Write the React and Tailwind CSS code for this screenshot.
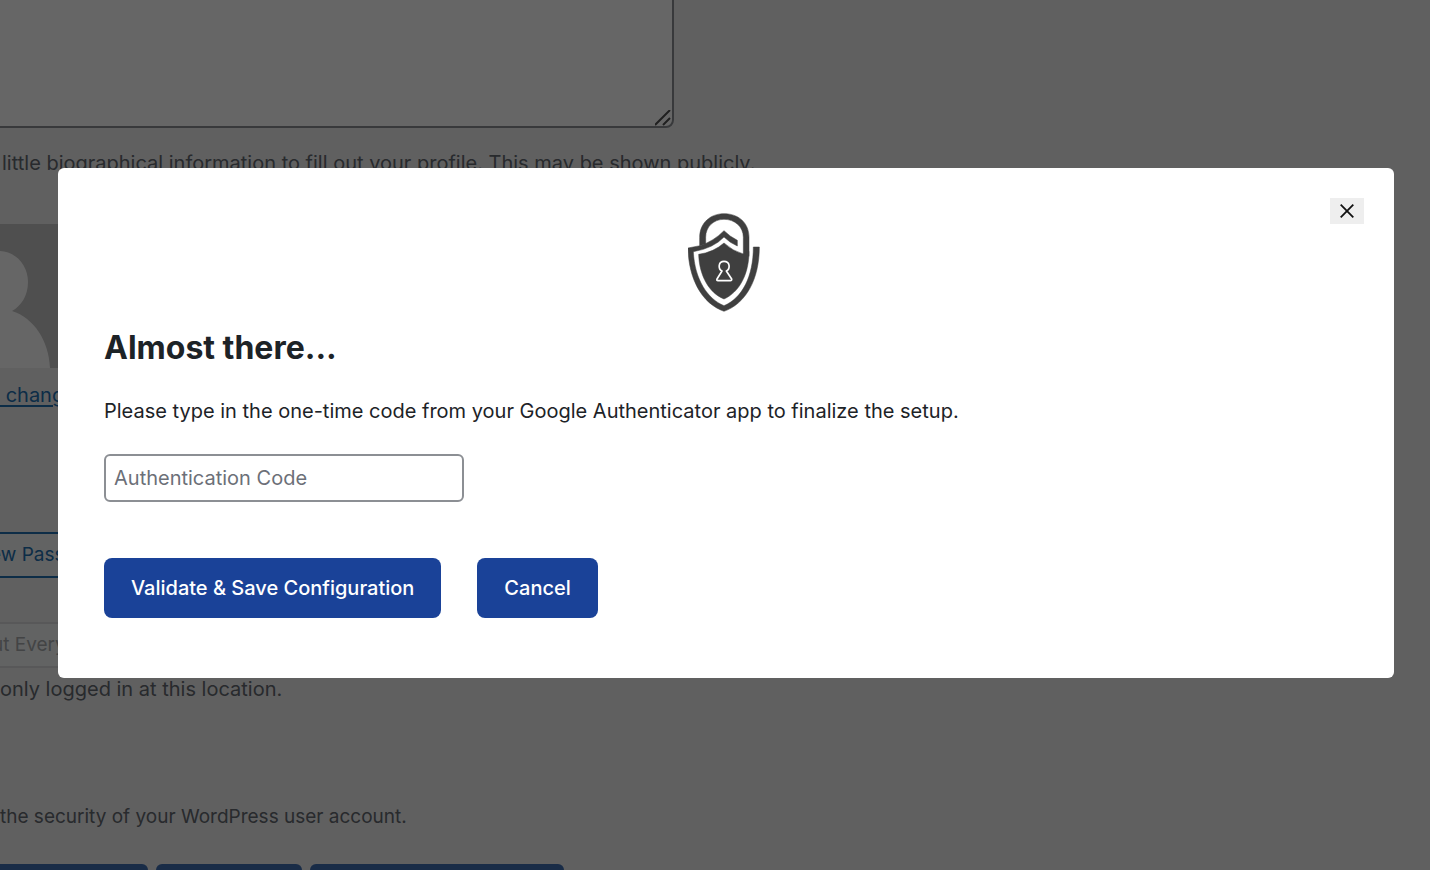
function ShieldLogo() {
  return (
    <svg viewBox="72 40 216 297" className="h-[99px] w-[72px]" role="img" aria-label="Security logo" fill="#3f3f3f">
      <g stroke="#3f3f3f" strokeWidth="1.5">
        <path d="M107 138V113C107 69 140 42 180 42C223 42 255 69 255 113V170L238 164V113C238 81 212 59 180 59C149 59 125 81 125 113V132Z" />
        <path d="M72 145L108 138Q150 124 180 93Q198 111 220 122V139Q198 130 180 112Q148 146 88 156C92 238 130 298 180 318C235 295 268 230 268 142H286C286 240 245 312 180 335C115 312 74 240 72 145Z" />
        <path d="M180 130Q148 158 104 164C106 228 135 280 180 298C225 278 255 225 255 155L238 163Q206 154 180 130Z" />
      </g>
      <path
        d="M174 214C161 207 163 185 180 185C198 185 200 207 187 214L203 238Q204 243 199 243H162Q157 243 159 238Z"
        fill="none"
        stroke="#fff"
        strokeWidth="5"
        strokeLinejoin="round"
      />
    </svg>
  );
}

function ProfilePage() {
  return (
    <main className="flex h-full flex-col items-start overflow-hidden bg-[#f0f0f1] text-xl text-[#646970]">
      <div className="relative h-32 w-[674px] shrink-0">
        <textarea
          aria-label="Biographical info"
          className="-ml-2 -mt-2 h-[136px] w-[682px] resize-none rounded-lg border-2 border-[#8c8f94] bg-white"
        />
        <svg viewBox="0 0 16 16" className="absolute bottom-0.5 right-[3px] size-4" stroke="#505050" strokeWidth="2" aria-hidden="true">
          <path d="M0 15L15 0M8 15L15 8" />
        </svg>
      </div>
      <p className="mt-5 pl-0.5 leading-[30px]">little biographical information to fill out your profile. This may be shown publicly.</p>
      <svg viewBox="0 0 72 144" className="mt-[46px] h-36 w-[72px] shrink-0" aria-hidden="true">
        <path d="M0 0H72V144H0Z" fill="#c5c5c5" />
        <path d="M0 27C17 28 28 42 28 58C28 72 21 82 12 87C34 94 49 117 50 144H0Z" fill="#fff" />
      </svg>
      <a href="#avatar" className="mt-3 whitespace-pre leading-[30px] text-[#2271b1] underline decoration-2 underline-offset-3">
        {" change"}
      </a>
      <button type="button" className="-ml-3 mt-[122px] h-[46px] shrink-0 rounded-md border-2 border-[#2271b1] bg-[#f6f7f7] pr-6 text-[19px] text-[#2271b1]">
        ew Password
      </button>
      <button type="button" disabled className="-ml-3 mt-11 h-[46px] shrink-0 rounded-md border-2 border-[#dcdcde] bg-[#f6f7f7] pl-0.5 pr-6 text-[19px] text-[#a7aaad]">
        ut Everywhere Else
      </button>
      <p className="mt-1.5 leading-[30px]">only logged in at this location.</p>
      <p className="mt-[98px] text-[19px] leading-[30px]">the security of your WordPress user account.</p>
      <div className="mt-8 flex gap-2">
        <button type="button" aria-label="Configure" className="h-11 w-[148px] rounded-r-md bg-[#3f6eb1]" />
        <button type="button" aria-label="Change" className="h-11 w-[146px] rounded-md bg-[#3f6eb1]" />
        <button type="button" aria-label="Backup codes" className="h-11 w-[254px] rounded-md bg-[#3f6eb1]" />
      </div>
    </main>
  );
}

function SetupDialog() {
  return (
    <section
      role="dialog"
      aria-modal="true"
      aria-labelledby="setup-title"
      className="relative flex w-full flex-col rounded-md bg-white px-[46px] pb-[60px] pt-[45px] text-xl text-[#1d2327]"
    >
      <button
        type="button"
        aria-label="Close"
        className="absolute right-[30px] top-[30px] flex h-[26px] w-[34px] items-center justify-center bg-[#eeeeee]"
      >
        <svg viewBox="0 0 14 14" className="size-3.5" stroke="#111" strokeWidth="1.8" aria-hidden="true">
          <path d="M0.7 0.7L13.3 13.3M13.3 0.7L0.7 13.3" />
        </svg>
      </button>
      <div className="flex justify-center pr-1">
        <ShieldLogo />
      </div>
      <h1 id="setup-title" className="mt-4 text-[32px] font-bold leading-10">
        Almost there...
      </h1>
      <p className="mt-7 leading-[30px]">
        Please type in the one-time code from your Google Authenticator app to finalize the setup.
      </p>
      <input
        type="text"
        aria-label="Authentication Code"
        placeholder="Authentication Code"
        className="mt-7 h-12 w-[360px] rounded-md border-2 border-[#8c8f94] px-2 placeholder:text-[#6c7078]"
      />
      <div className="mt-14 flex gap-9 font-medium text-white">
        <button type="button" className="h-[60px] rounded-lg bg-[#1a4298] px-[27px]">
          Validate &amp; Save Configuration
        </button>
        <button type="button" className="h-[60px] rounded-lg bg-[#1a4298] px-[27px]">
          Cancel
        </button>
      </div>
    </section>
  );
}

export default function App() {
  return (
    <div className="h-screen font-['Inter',sans-serif]">
      <ProfilePage />
      <div className="fixed inset-0 flex items-start bg-black/60 pl-[58px] pr-9 pt-[168px]">
        <SetupDialog />
      </div>
    </div>
  );
}
